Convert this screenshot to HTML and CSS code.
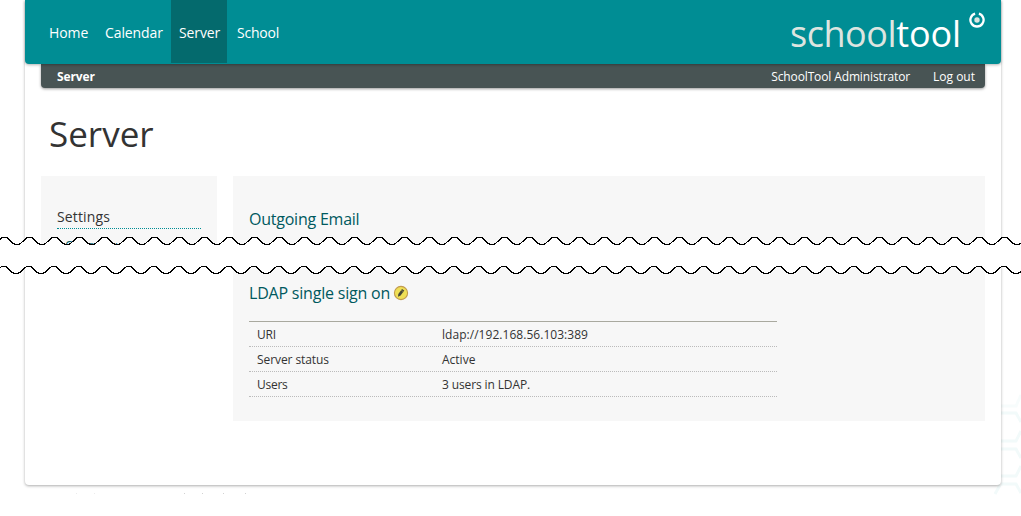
FILE: index.html
```html
<!DOCTYPE html>
<html lang="en">
<head>
<meta charset="utf-8">
<title>Server</title>
<link rel="stylesheet" href="styles.css">
</head>
<body>
<svg class="backdrop" width="60" height="130" viewBox="0 0 60 130" aria-hidden="true">
  <path opacity=".6" d="M60 17L55 28H40"/>
  <path d="M40 35H55L60 44M60 53L55 63H40M40 71H55L60 80M60 88L55 98H40M40 106H55L60 115M39 107L34 116"/>
</svg>
<div class="page">
  <header class="header">
    <nav class="nav">
      <a class="tab"><span>Home</span></a>
      <a class="tab"><span>Calendar</span></a>
      <a class="tab active"><span>Server</span></a>
      <a class="tab"><span class="t-school">School</span></a>
    </nav>
    <div class="logo">
      <span class="word"><span class="dim">school</span><span class="bright">tool</span></span>
      <svg class="mark" width="16" height="16" viewBox="0 0 16 16"><path d="M6.1 1.6A6.6 6.6 0 1 0 9.9 1.6" fill="none" stroke="#fff" stroke-width="2.3"/><circle cx="8" cy="8" r="2.7" fill="#dde5e0"/></svg>
    </div>
  </header>
  <div class="subbar">
    <b class="crumb">Server</b>
    <div class="user"><span class="t-admin">SchoolTool Administrator</span><span>Log out</span></div>
  </div>
  <h1>Server</h1>
  <div class="columns">
    <aside class="sidebar">
      <h3>Settings</h3>
      <a class="side-link">Overview</a>
    </aside>
    <main class="content">
      <h2>Outgoing Email</h2>
      <h2 class="ldap"><span>LDAP single sign on</span>
        <svg width="16" height="16" viewBox="0 0 16 16"><circle cx="8" cy="8" r="6.6" fill="#efdf55" stroke="#c29b4e" stroke-width="1.1"/><path d="M5 11.8L5.3 9L9 4L11.3 5.6L7.6 10.4Z" fill="#484836"/><path d="M8.1 5.2L10.4 6.8" stroke="#a9a14c" stroke-width=".6"/></svg>
      </h2>
      <dl>
        <div class="row"><dt class="t-tight">URI</dt><dd class="t-addr">ldap://192.168.56.103:389</dd></div>
        <div class="row"><dt class="t-status">Server status</dt><dd>Active</dd></div>
        <div class="row"><dt class="t-tight">Users</dt><dd class="t-count">3 users in LDAP.</dd></div>
      </dl>
    </main>
  </div>
</div>
<svg class="specks" width="180" height="2" viewBox="0 0 180 2" aria-hidden="true">
  <path fill="#ececec" d="M6 0h1v1h-1zM24 0h1v1h-1z"/>
  <path fill="#d2d2d2" d="M114 0h1v1h-1zM132 0h1v1h-1zM153 0h1v1h-1zM175 0h1v1h-1z"/>
</svg>
<svg class="tear" width="1021" height="40" viewBox="0 0 1021 40" aria-hidden="true">
  <defs>
    <pattern id="top" width="25" height="20" patternUnits="userSpaceOnUse">
      <path class="fill" d="M0 4.5C2 2 6 1.5 8 3.5L13 8.5C15 9.8 19 9.8 21 8L25 4.5V20H0Z"/>
      <path class="line" d="M-1 5.5L0 4.5C2 2 6 1.5 8 3.5L13 8.5C15 9.8 19 9.8 21 8L26 3.5"/>
    </pattern>
    <pattern id="bottom" width="25" height="20" y="20" patternUnits="userSpaceOnUse">
      <path class="fill" d="M0 0H25V12.8L20 17.5C18 18.8 14 18.8 12 17.5L7 12.5C5 10.5 2 11 0 12.8Z"/>
      <path class="line" d="M-1 13.8L0 12.8C2 11 5 10.5 7 12.5L12 17.5C14 18.8 18 18.8 20 17.5L25 12.8L26 11.8"/>
    </pattern>
  </defs>
  <rect width="1021" height="20" fill="url(#top)"/>
  <rect y="20" width="1021" height="20" fill="url(#bottom)"/>
</svg>
</body>
</html>
```
FILE: styles.css
```css
* { box-sizing: border-box; }
body { margin: 0; height: 516px; overflow: hidden; background: #fff; color: #333; font: 12px/16px "Open Sans", "Noto Sans", sans-serif; position: relative; }
span, dd, dt { white-space: nowrap; }
.page { position: relative; width: 976px; height: 485px; margin-left: 25px; background: #fff; border-radius: 0 0 4px 4px; box-shadow: 0 1px 3px rgba(0,0,0,.33); }
.header { position: relative; height: 64px; display: flex; justify-content: space-between; background: #008d94; border-radius: 0 0 4px 4px; padding: 0 16px; box-shadow: 0 1px 3px rgba(0,0,0,.3); z-index: 1; }
.nav { display: flex; height: 63px; color: #fff; font-size: 14px; line-height: 66px; letter-spacing: -.1px; }
.tab { padding: 0 8px; }
.tab:nth-child(1) { width: 56px; }
.tab:nth-child(2) { width: 74px; }
.tab:nth-child(3) { width: 56px; }
.tab:nth-child(4) { padding-left: 10px; }
.t-school { letter-spacing: -.2px; }
.active { background: #046a6d; }
.logo { display: flex; gap: 8px; }
.word { font-size: 36px; line-height: 67px; color: #fff; }
.dim { color: #dde5e0; letter-spacing: -.45px; }
.bright { font-weight: 500; letter-spacing: -.1px; }
.mark { margin-top: 12px; }
.subbar { height: 24px; margin: 0 16px; padding: 0 10px 0 16px; display: flex; justify-content: space-between; background: #485454; color: #fff; line-height: 25px; border-radius: 0 0 4px 4px; box-shadow: 0 1px 3px rgba(0,0,0,.4); }
.crumb { letter-spacing: -.1px; }
.user { display: flex; gap: 23px; }
.t-admin { letter-spacing: -.125px; }
h1, h2, h3, dl, dd { margin: 0; font-weight: normal; }
h1 { height: 88px; padding: 22px 24px 0; font-size: 35px; line-height: 48px; }
.columns { display: flex; gap: 16px; padding: 0 16px; height: 245px; }
.sidebar { width: 176px; height: 80px; background: #f7f7f7; padding: 31px 16px 0; }
h3 { font-size: 14px; line-height: 20px; height: 22px; letter-spacing: .15px; border-bottom: 1px dotted #008d94; }
.side-link { display: block; padding: 9px 8px 0; color: #00595e; font-size: 12px; }
.content { width: 752px; background: #f7f7f7; padding: 31px 16px 0; }
h2 { color: #00595e; font-size: 16px; line-height: 24px; height: 24px; letter-spacing: -.23px; }
.ldap { margin-top: 50px; display: flex; align-items: center; gap: 3px; letter-spacing: -.2px; }
dl { width: 528px; margin-top: 16px; border-top: 1px solid #a9a99f; }
.row { display: flex; height: 25px; line-height: 25px; padding-left: 8px; border-bottom: 1px dotted #bbb; }
dt { width: 185px; }
.t-tight { letter-spacing: -.25px; }
.t-status { letter-spacing: -.08px; }
.t-addr { letter-spacing: .04px; }
.t-count { letter-spacing: -.12px; }
.tear { position: absolute; left: 0; top: 235px; }
.fill { fill: #fff; }
.line { fill: none; stroke: #000; stroke-width: 1.2; shape-rendering: crispEdges; }
.backdrop { position: absolute; left: 961px; top: 378px; fill: none; stroke: #f2fafa; stroke-width: 3; }
.specks { position: absolute; left: 70px; top: 493px; }
```
